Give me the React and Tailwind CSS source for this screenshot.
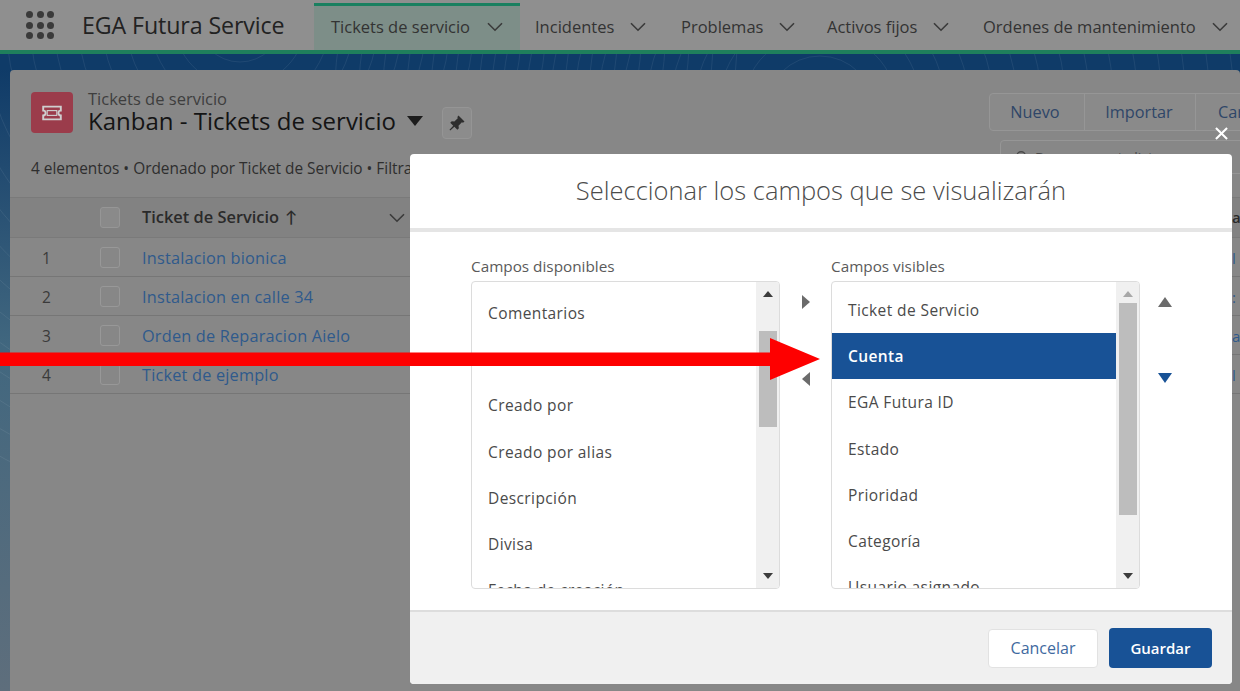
import React from "react";

const Chevron = ({ className = "" }) => (
  <svg viewBox="0 0 16 10" className={`h-[10px] w-[16px] shrink-0 ${className}`} fill="none" stroke="#3a3a3a" strokeWidth="1.6">
    <path d="M1 1.2 L8 8.2 L15 1.2" />
  </svg>
);

const Tri = ({ dir, color, className = "" }) => {
  const pts = { up: "0,10 7,0 14,10", down: "0,0 14,0 7,10", left: "8,0 8,14 0,7", right: "0,0 8,7 0,14" }[dir];
  const box = dir === "up" || dir === "down" ? "0 0 14 10" : "0 0 8 14";
  return (
    <svg viewBox={box} preserveAspectRatio="none" className={className}>
      <polygon points={pts} fill={color} />
    </svg>
  );
};

const navItems = [
  ["Incidentes", "w-[146px]"],
  ["Problemas", "w-[146px]"],
  ["Activos fijos", "w-[156px]"],
  ["Ordenes de mantenimiento", "w-[260px]"],
];

const rows = [
  ["1", "Instalacion bionica", "l"],
  ["2", "Instalacion en calle 34", ":"],
  ["3", "Orden de Reparacion Aielo", "a"],
  ["4", "Ticket de ejemplo", "l"],
];

const ListBox = ({ items, thumbClass, paddingClass, upColor, textPad }) => (
  <div className="relative h-[308px] w-[309px] overflow-hidden rounded-[4px] border border-[#dcdcdc] bg-white">
    <div className={`${paddingClass} pr-[23px]`}>
      {items.map(([t, sel], i) => (
        <div
          key={i}
          className={`flex h-[46.2px] items-center ${textPad} pt-[1px] text-[15.5px] tracking-[0.4px] ${sel ? "bg-[#185296] font-semibold text-white" : "text-[#4a4a4a]"}`}
        >
          {t}
        </div>
      ))}
    </div>
    <div className="absolute right-0 top-0 h-full w-[23px] bg-[#f0f0f0]">
      <div className={`absolute left-[3px] w-[18px] bg-[#bdbdbd] ${thumbClass}`} />
      <Tri dir="up" color={upColor} className="absolute left-[7px] top-[9px] h-[6px] w-[10px]" />
      <Tri dir="down" color="#3c3c3c" className="absolute bottom-[9px] left-[7px] h-[6px] w-[10px]" />
    </div>
  </div>
);

export default function App() {
  return (
    <div
      className="relative h-[691px] w-[1240px] overflow-hidden bg-gradient-to-b from-[#0f3b68] from-[10%] via-[#41677f] via-[50%] to-[#5e6e7c] text-[#3a3a3a]"
      style={{ fontFamily: '"Open Sans", "Noto Sans", Lato, sans-serif' }}
    >
      {/* faint contour texture of the page background */}
      <svg viewBox="0 0 1240 691" className="absolute left-0 top-0 h-[691px] w-[1240px]" fill="none" stroke="#ffffff" strokeOpacity="0.07" strokeWidth="1">
        {Array.from({ length: 40 }).map((_, i) => (
          <circle key={i} cx={i % 2 ? 240 : 820} cy={i % 2 ? 20 : 110} r={30 + i * 12} />
        ))}
      </svg>

      {/* app header */}
      <header className="relative flex h-[54px] items-stretch border-b-[4px] border-[#1f7f5c] bg-[#8f8f8f]">
        <div className="flex w-[314px] items-center">
          <div className="ml-[26px] grid w-[28px] grid-cols-3 gap-[3.5px]">
            {Array.from({ length: 9 }).map((_, i) => (
              <span key={i} className="h-[7px] w-[7px] rounded-full bg-[#3a3a3a]" />
            ))}
          </div>
          <span className="ml-[28px] pt-[2px] text-[23.2px] leading-none tracking-[-0.1px] text-[#222]">EGA Futura Service</span>
        </div>
        <div className="mt-[3px] flex w-[206px] items-center gap-[17px] border-t-[3px] border-[#1a8060] bg-[#7d8e88] pb-[2px] pl-[17px] text-[16.5px] text-[#333]">
          <span className="whitespace-nowrap">Tickets de servicio</span>
          <Chevron />
        </div>
        {navItems.map(([t, w]) => (
          <div key={t} className={`flex ${w} items-center gap-[16px] pl-[15px] pt-[4px] text-[16.5px] text-[#333]`}>
            <span className="whitespace-nowrap">{t}</span>
            <Chevron />
          </div>
        ))}
      </header>

      {/* page card */}
      <main className="relative ml-[10px] mt-[16px] h-[621px] rounded-t-[4px] bg-[#878787]">
        <div className="flex h-[127px] items-start justify-between">
          <div>
            <div className="flex pl-[21px] pt-[22px]">
              <div className="flex h-[41px] w-[42px] items-center justify-center rounded-[4px] bg-[#9b3c4b]">
                <svg viewBox="0 0 26 20" className="h-[16px] w-[22px]" fill="none" stroke="#cfcfcf" strokeWidth="2.4">
                  <path d="M2 2 H24 V7 a3 3 0 0 0 0 6 V18 H2 V13 a3 3 0 0 0 0 -6 Z" />
                  <rect x="7" y="7" width="12" height="6" strokeWidth="1.4" />
                </svg>
              </div>
              <div className="ml-[15px]">
                <div className="-mt-[1px] whitespace-nowrap text-[16.5px] leading-[16px] text-[#3e3e3e]">Tickets de servicio</div>
                <div className="mt-[1px] flex h-[26px] items-center">
                  <span className="whitespace-nowrap text-[24px] font-medium leading-[24px] text-[#141414]">Kanban - Tickets de servicio</span>
                  <Tri dir="down" color="#1c1c1c" className="ml-[11px] h-[10px] w-[16px]" />
                  <div className="ml-[19px] mt-[3px] flex h-[32px] w-[30px] shrink-0 items-center justify-center rounded-[4px] border border-[#959595] bg-[#8c8c8c]">
                    <svg viewBox="0 0 24 24" className="h-[18px] w-[18px]" fill="#2e2e2e">
                      <path d="M14 2 L22 10 L20 11.5 L18.5 11 L14 15.5 L14.5 19 L12.5 21 L8.5 17 L3 22 L2 21 L7 15.5 L3 11.5 L5 9.5 L8.5 10 L13 5.5 L12.5 4 Z" />
                    </svg>
                  </div>
                </div>
              </div>
            </div>
            <div className="mt-[25px] whitespace-nowrap pl-[21px] text-[15.4px] leading-[20px] text-[#2e2e2e]">
              4 elementos • Ordenado por Ticket de Servicio • Filtrado por todos
            </div>
          </div>
          <div className="w-[251px] pt-[23px]">
            <div className="flex h-[38px] w-[300px] items-center rounded-l-[4px] border border-[#969696] bg-[#8a8a8a] text-[16.3px] text-[#2f4668]">
              <span className="flex h-full w-[95px] items-center justify-center border-r border-[#969696] pr-[4px]">Nuevo</span>
              <span className="flex h-full w-[111px] items-center justify-center border-r border-[#969696] pr-[2px]">Importar</span>
              <span className="pl-[22px]">Cambiar</span>
            </div>
            <div className="ml-[11px] mt-[9px] flex h-[34px] w-[300px] items-center gap-[6px] rounded-[4px] border border-[#969696] pl-[14px] text-[14px] text-[#4a4a4a]">
              <svg viewBox="0 0 16 16" className="h-[14px] w-[14px]" fill="none" stroke="#4a4a4a" strokeWidth="1.5">
                <circle cx="7" cy="7" r="5" />
                <path d="M11 11 L15 15" />
              </svg>
              <span className="whitespace-nowrap">Buscar en esta lista...</span>
            </div>
          </div>
        </div>

        {/* table */}
        <div className="flex h-[41px] items-center border-y border-[#7a7a7a] bg-[#828282]">
          <div className="w-[90px]" />
          <div className="h-[21px] w-[20px] rounded-[3px] border border-[#969696] bg-[#8a8a8a]" />
          <div className="ml-[22px] flex w-[247px] items-center gap-[6px] text-[16.4px] font-semibold text-[#2a2a2a]">
            <span className="whitespace-nowrap">Ticket de Servicio</span>
            <span className="leading-none">↑</span>
          </div>
          <Chevron />
          <div className="ml-auto w-[8px] overflow-hidden text-[15px] font-semibold text-[#2a2a2a]">a</div>
        </div>
        {rows.map(([n, t, end]) => (
          <div key={n} className="flex h-[39px] items-center border-b border-[#767676]">
            <div className="w-[90px] pl-[32px] pt-[4px] text-[15.5px] text-[#3a3a3a]">{n}</div>
            <div className="h-[21px] w-[20px] rounded-[3px] border border-[#989898]" />
            <div className="ml-[22px] whitespace-nowrap pt-[2px] text-[16.3px] tracking-[0.2px] text-[#2f5a8c]">{t}</div>
            <div className="ml-auto w-[8px] overflow-hidden pt-[2px] text-[15px] text-[#2f5a8c]">{end}</div>
          </div>
        ))}
      </main>

      {/* close icon */}
      <svg viewBox="0 0 14 14" className="absolute left-[1215px] top-[127px] h-[13px] w-[13px]" stroke="white" strokeWidth="2.2">
        <path d="M1 1 L13 13 M13 1 L1 13" />
      </svg>

      {/* modal */}
      <section className="absolute left-[410px] top-[154px] flex h-[530px] w-[822px] flex-col overflow-hidden rounded-[4px] bg-white">
        <div className="flex h-[78px] shrink-0 items-center justify-center border-b-[4px] border-[#e5e5e5] pb-[2px] text-[25.5px] font-light text-[#4b4b4b]">
          Seleccionar los campos que se visualizarán
        </div>
        <div className="flex h-[378px] shrink-0 items-start pl-[61px] pt-[25px]">
          <div>
            <div className="mb-[6px] h-[18px] whitespace-nowrap text-[15.3px] leading-[18px] text-[#5a5a5a]">Campos disponibles</div>
            <ListBox
              paddingClass="pt-[8px]"
              textPad="pl-[16px]"
              thumbClass="top-[49px] h-[96px]"
              upColor="#3c3c3c"
              items={[["Comentarios"], [""], ["Creado por"], ["Creado por alias"], ["Descripción"], ["Divisa"], ["Fecha de creación"]]}
            />
          </div>
          <div className="flex h-[130px] w-[51px] flex-col items-center pt-[38px]">
            <Tri dir="right" color="#6b6b6b" className="h-[14px] w-[8px]" />
            <Tri dir="left" color="#6b6b6b" className="mt-[63px] h-[14px] w-[8px]" />
          </div>
          <div>
            <div className="mb-[6px] h-[18px] whitespace-nowrap text-[15.3px] leading-[18px] text-[#5a5a5a]">Campos visibles</div>
            <ListBox
              paddingClass="pt-[5px]"
              textPad="pl-[16px]"
              thumbClass="top-[21px] h-[212px]"
              upColor="#a8a8a8"
              items={[["Ticket de Servicio"], ["Cuenta", true], ["EGA Futura ID"], ["Estado"], ["Prioridad"], ["Categoría"], ["Usuario asignado"]]}
            />
          </div>
          <div className="flex w-[50px] flex-col items-center pt-[40px]">
            <Tri dir="up" color="#6b6b6b" className="h-[10px] w-[14px]" />
            <Tri dir="down" color="#185296" className="mt-[66px] h-[10px] w-[14px]" />
          </div>
        </div>
        <div className="flex flex-1 items-center justify-end gap-[11px] border-t-[2px] border-[#dddddd] bg-[#f0f0f0] pr-[20px]">
          <button className="h-[39px] w-[110px] rounded-[4px] border border-[#e2e2e2] bg-white text-[16px] text-[#3f6aa0]">Cancelar</button>
          <button className="h-[40px] w-[103px] rounded-[4px] bg-[#185296] text-[15px] font-semibold text-white">Guardar</button>
        </div>
      </section>

      {/* red annotation arrow */}
      <svg viewBox="0 0 822 60" className="absolute left-0 top-[330px] h-[60px] w-[822px]">
        <polygon points="0,22.5 770,22.5 770,8 820,29 770,50 770,36 0,36" fill="#fe0000" />
      </svg>
    </div>
  );
}
